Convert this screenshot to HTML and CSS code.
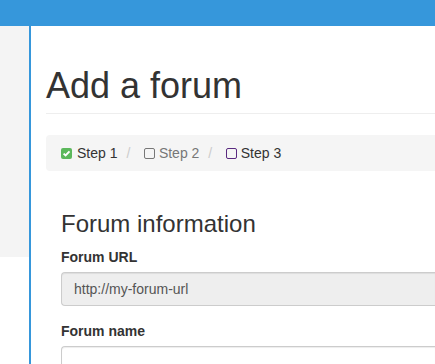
FILE: index.html
```html
<!DOCTYPE html>
<html>
<head>
<meta charset="utf-8">
<link rel="stylesheet" href="styles.css">
</head>
<body>
<div class="topbar"></div>
<div class="layout">
  <aside class="sidebar"></aside>
  <main class="main">
    <div class="page-header"><h1>Add a forum</h1></div>
    <ol class="crumbs">
      <li class="done"><svg class="ico" width="11" height="11" viewBox="0 0 11 11"><rect x="0" y="0" width="11" height="11" rx="2" fill="#5cb85c"/><path d="M2.6 5.6 L4.6 7.5 L8.5 3.4" fill="none" stroke="#fff" stroke-width="1.9"/></svg><span>Step 1</span></li>
      <li class="active"><svg class="ico" width="11" height="11" viewBox="0 0 11 11"><rect x="0.5" y="0.5" width="10" height="10" rx="1.5" fill="none" stroke="#777" stroke-width="1"/></svg><span>Step 2</span></li>
      <li class="todo"><svg class="ico" width="11" height="11" viewBox="0 0 11 11"><rect x="0.5" y="0.5" width="10" height="10" rx="1.5" fill="none" stroke="#5a2a80" stroke-width="1"/></svg><span>Step 3</span></li>
    </ol>
    <section class="form-area">
      <h3>Forum information</h3>
      <div class="group">
        <label>Forum URL</label>
        <div class="input readonly">http://my-forum-url</div>
      </div>
      <div class="group">
        <label>Forum name</label>
        <div class="input"></div>
      </div>
    </section>
  </main>
</div>
</body>
</html>
```
FILE: styles.css
```css
html, body {
  margin: 0;
  padding: 0;
  overflow: hidden;
  background: #fff;
}
body {
  font-family: "Liberation Sans", Arial, sans-serif;
  font-size: 14px;
  line-height: 20px;
  color: #333;
}
.topbar {
  height: 26px;
  background: #3697db;
}
.layout {
  display: flex;
  align-items: flex-start;
  height: 338px;
}
.sidebar {
  width: 29px;
  height: 231px;
  background: #f4f4f4;
  flex: none;
}
.main {
  flex: 1 1 auto;
  min-width: 0;
  height: 338px;
  border-left: 2px solid #3697db;
  padding: 0 0 0 15px;
}
.page-header {
  margin-top: 40px;
  padding-bottom: 7px;
  border-bottom: 1px solid #eee;
}
h1 {
  margin: 0;
  font-size: 36px;
  font-weight: 500;
  line-height: 39.6px;
  white-space: nowrap;
}
.crumbs {
  list-style: none;
  margin: 21px 0 0;
  padding: 8px 15px;
  background: #f5f5f5;
  border-radius: 4px 0 0 4px;
  display: flex;
  align-items: center;
  height: 20px;
}
.crumbs li {
  display: flex;
  align-items: center;
}
.crumbs li + li::before {
  content: "/";
  color: #ccc;
  padding: 0 13.5px 0 9px;
}
.crumbs .ico {
  display: block;
  margin-right: 5px;
  margin-top: 1px;
}
.crumbs .active {
  color: #777;
}
.crumbs .active .ico,
.crumbs .todo .ico {
  margin-right: 4px;
}
.form-area {
  padding: 0 0 0 15px;
}
h3 {
  margin: 40px 0 10px;
  font-size: 24px;
  font-weight: 500;
  line-height: 26.4px;
}
.group {
  margin-bottom: 15px;
}
label {
  display: block;
  font-weight: bold;
  margin-bottom: 5px;
}
.input {
  height: 20px;
  padding: 6px 12px;
  border: 1px solid #ccc;
  border-right: 0;
  border-radius: 4px 0 0 4px;
  color: #555;
  background: #fff;
  box-shadow: inset 0 1px 1px rgba(0,0,0,.075);
}
.input.readonly {
  background: #eee;
}
```
